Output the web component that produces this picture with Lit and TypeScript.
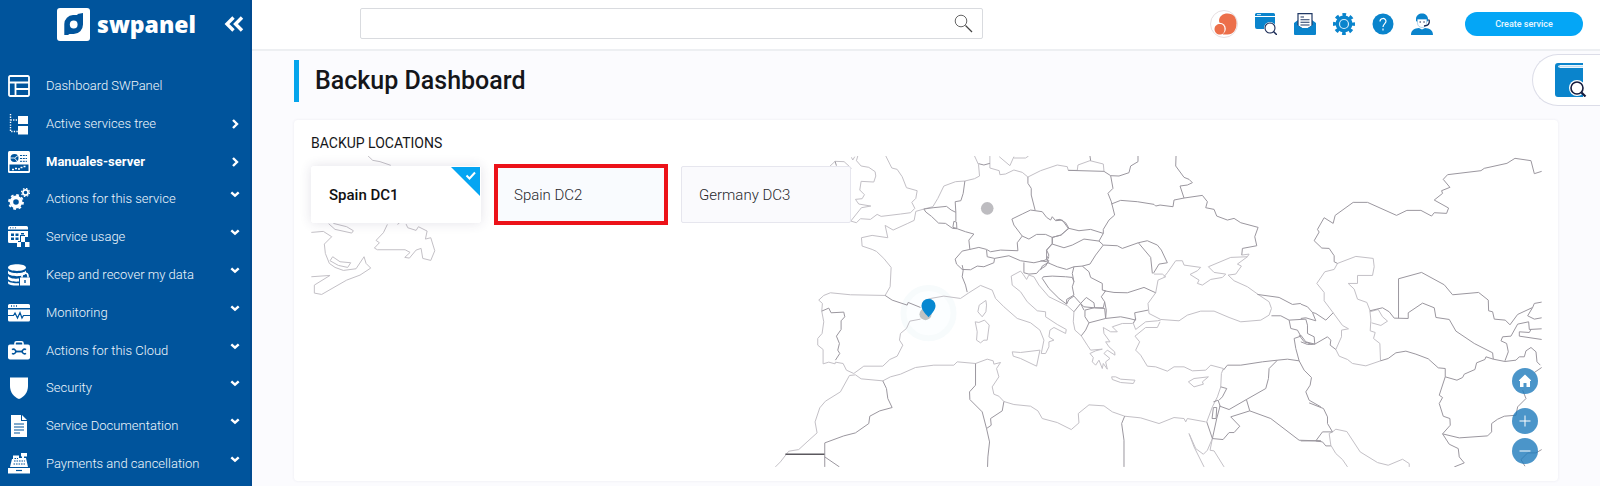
import { LitElement, html, svg, css } from "lit";
import { customElement, property, state } from "lit/decorators.js";
import { classMap } from "lit/directives/class-map.js";

/* ---------- map data: every sheet is drawn at three units per map unit ---------- */

interface Sheet {
  x: number;
  y: number;
  coast: string;
  border: string;
}

const SHEETS: Sheet[] = [
  {
    x: -31,
    y: -116,
    coast: `M264,348 278,361 300,365 332,376
      M94,577 130,574 155,590 133,612 136,640 148,670 165,682 190,691 228,686 252,650 258,670 272,684 240,705 200,720 165,740 125,763 103,759 103,735 150,706 94,710
      M146,551 165,568 215,579 220,572 200,560 160,550
      M158,650 180,665 212,668 203,682 175,676 150,662Z
      M322,553 310,578 288,601 298,608 283,624 292,629 375,629 390,637 374,652 388,654 408,630 423,625 428,655 452,661 464,632 452,593 436,597 441,573 415,560 408,571 383,563 378,552
      M352,553 358,549`,
    border: "",
  },
  {
    x: 489,
    y: -16,
    coast: `M88,79 104,64 131,65 153,85
      M172,48 168,62 182,78 205,82 224,95 226,108 220,126 182,124 178,150 192,164 185,176 165,178 175,192 211,198 183,203 151,243 168,248 180,236 210,238 230,223 242,229 300,222 330,218 343,205 334,187 346,175 350,152 318,143 305,110 290,88 274,84 256,48
      M153,52 157,60 163,50
      M370,207 346,214 341,241 322,250 278,270 254,256 262,293 215,286 183,293 185,318 215,328 228,334 250,355 272,382 269,440 254,466
      M370,207 397,200 412,175 430,138 465,125 493,123 522,116 537,108 534,74 522,48
      M568,48 568,84 596,92 598,104 615,102 640,90 665,97 682,111 720,92 770,75 800,80 803,91
      M596,50 628,77 640,50 M640,54 675,54 684,48
      M385,476 430,468 480,475 505,458 540,436 575,450 585,475 610,500 650,535 690,548 718,570 730,600 722,640 735,640 745,620 745,605 760,600 745,590 748,570 760,562 795,580 797,568 770,553 735,530 735,515 710,512 680,485 660,455 635,435 632,408 660,393 668,403 678,418 685,405 700,410 715,435 745,470 800,497
      M556,481 536,495 532,515 545,530 556,515 558,495Z
      M524,545 535,547 552,540 566,555 560,600 550,600 540,608 528,600 530,575Z
      M635,635 660,637 718,630 708,678 660,655 638,648Z
      M360,537 328,543 318,565 300,580 297,600 307,615 290,648 268,658 247,678 190,678 160,700 138,690 128,670 105,666 104,671 85,666 68,671 68,628 52,615 52,595 65,580 70,545 64,513 66,490 55,480 70,466 90,458 150,464 254,466
      M147,706 120,755 75,783 58,803 44,845 50,878 20,905 -5,928 -35,933 -60,965 -75,980
      M147,706 165,704 182,716 247,722 270,710 300,702 345,682 400,675 460,675 470,665 525,670 560,657 578,662 580,672 600,667 588,685 595,710 575,740 580,762 595,768 610,784 640,793 690,798 712,812 725,835 770,847 812,868`,
    border: `M104,64 108,77
      M370,207 376,216 393,229 414,249 435,250 456,265 470,266 495,275 520,282 505,300 508,328
      M370,207 398,203 438,199 452,210 466,217 466,243 M460,244 457,262 469,265 468,246Z
      M493,123 488,160 481,182 464,185 466,217
      M534,71 550,75 568,70
      M682,111 682,130 692,145 692,165 704,212 690,210 665,222 634,237 640,255 665,288 685,297 708,283 735,283 755,292 782,285 803,265
      M704,212 725,215 738,232 750,240 755,230 765,242 785,240 803,265
      M665,288 650,308 652,332 600,330 570,335 558,328 535,322 508,328 485,333 464,357 468,372 485,388 510,389 530,378 550,380 580,368 582,355 560,350 558,330
      M582,355 625,347 660,362 700,368 735,360 745,345 738,330 755,310 755,292
      M485,375 488,390 485,410 495,435 500,456
      M254,466 275,480 320,495 323,487 360,502
      M670,367 670,398 685,402 708,400 718,388 735,378 745,360
      M64,513 85,504 92,518 130,516 133,530 122,542 122,568 108,588 117,610 112,630 118,640 105,660
      M247,722 258,745 262,775 275,802 238,812 208,828 205,850 165,878 130,887 73,908 73,980 M73,950 117,980
      M525,670 525,735 507,755 508,778 545,815 558,865 567,905 562,950 561,980 M558,865 572,855 570,835 605,812 610,784`,
  },
  {
    x: 729,
    y: -16,
    coast: `M83,91 110,91 112,75 148,62 188,72 190,93
      M92,868 115,848 113,820 145,794 190,797 215,815 252,828 300,833 355,850 400,832 430,835 435,845 440,835 495,845
      M603,345 625,342 620,350 570,352 503,380 520,397 555,402 545,412 510,418 485,435 470,430 475,420 448,403 470,392 480,382 430,375 425,362 405,362 380,398 370,410
      M620,350 590,372 602,378 585,402 562,405 580,422 620,440 655,465 685,485 692,505 685,525 660,540 600,545 565,532 520,513 480,513 440,525 415,542 360,538 325,520 322,490 345,458 352,420 375,410 365,402 340,402
      M80,497 100,515 98,545 103,570 122,587
      M122,587 140,615 150,630 185,627 165,632 148,640 158,652 155,665 165,675 175,660 185,685 188,670 200,687 195,665 208,655 190,640 200,630 223,645 222,635 205,620 195,605 208,605 190,580 188,562 210,575 230,575 215,560 245,550 275,550 280,545
      M278,550 285,568 315,545 350,542 360,540
      M358,545 350,562 315,562 283,588 297,605 285,630 300,645 320,678 345,680 380,693 400,680 430,680 455,692 495,690 510,675 548,685 542,700 540,740 530,770 515,800 498,845
      M443,725 460,715 503,710 485,725 488,732 460,740Z
      M213,710 225,710 240,717 283,720 278,730 240,727 215,718Z
      M490,980 460,920 445,880 465,925 488,942 500,930 515,895 508,930 520,932 550,980`,
    border: `M83,91 190,94 210,107 235,108 265,98 270,78 292,65 292,48 M148,48 150,62
      M210,107 217,145 202,160 212,185 222,225 205,240 188,268 188,280
      M212,192 240,181 290,185 340,193 345,198 358,195 397,200 400,180 430,174 418,138 440,135 455,128 445,118 430,112 405,78 406,48
      M430,174 485,166 500,185 495,203 520,208 528,228 560,240 580,235 600,248 652,262 642,290 648,317 605,325 603,345
      M188,315 230,317 245,325 293,308 320,302 350,315 362,330 380,368 355,372 338,400 M293,308 330,352 335,400
      M188,315 165,345 148,372 125,378 100,380 78,388 50,380 22,368 5,378 0,390
      M188,280 175,303 130,297 95,315 70,323 35,312 35,292 60,285 85,265 115,272 150,268 188,280 M175,303 188,315
      M45,240 58,238 75,248 85,265
      M35,312 18,330 18,358 25,368 M25,350 18,365 0,362
      M125,378 145,395 150,412 185,430 185,450 195,452 182,470 192,485 188,503 162,503 160,488 137,472 120,490 M100,380 95,400 100,425
      M5,415 25,445 55,475 78,492 78,478 100,465 95,440 100,425 95,412 75,410 35,408 8,410Z
      M190,452 220,457 260,458 310,442 345,458
      M192,485 197,510 195,535 240,530 265,535 285,540 282,518 322,510 M285,535 278,550
      M78,492 85,478 100,468 120,490 100,515 M120,490 130,500 160,503
      M133,510 160,503 192,505 195,535 145,548 133,530Z M122,587 135,570 145,548 M120,490 130,510
      M548,690 560,675 600,675 665,665 710,660 740,657 775,662 790,690 812,712 808,735 795,755 805,780 840,800
      M540,740 558,745 545,770 535,780
      M710,660 685,685 683,715 675,745 617,778 565,808 535,797
      M617,778 627,812 570,830 597,858 580,877 565,877 547,898 515,895 528,835 538,797 532,780 518,785
      M518,802 528,802 526,835 514,835Z M498,845 515,895
      M252,828 243,850 250,900 250,980
      M627,812 690,835 775,900 840,902
      M775,662 765,625 760,595 780,588 770,570 750,565 745,540 720,527 692,527
      M650,463 715,472 755,493 780,490
      M745,540 795,537 M775,585 790,605 815,613`,
  },
  {
    x: 989,
    y: -16,
    coast: `M95,875 85,880 90,915 105,940 125,958 140,980
      M95,875 105,867 138,874 178,935 230,967 262,975 305,957 325,970 325,980
      M110,370 165,349 217,355 220,380 215,406 170,406 170,430 142,430 160,447 170,477 198,487 207,510 210,540 208,572 223,577 218,595 237,610 239,662 195,677 155,670 140,658 115,648 105,628 122,590 122,570 143,566 125,556 97,518 70,482 70,457 48,430 72,395 100,388Z
      M207,515 232,508 245,530 260,543 240,556 212,548`,
    border: `M60,902 45,902 0,902 M45,902 65,875 95,875 M45,902 65,905 75,917 90,917
      M25,788 68,805 80,830 80,850 95,875
      M722,94 700,101 690,62 642,55 618,70 550,85 540,92 440,104 427,118 447,142 422,152 425,160 400,180 443,204 437,220 400,218 392,228 360,211 318,211 287,226 200,187 157,187 103,226 97,250 70,233 50,268 55,276 40,302 63,324 85,325 100,347 100,365 110,370
      M207,512 245,503 265,515 280,534 322,535 322,518 365,489 400,503 405,532 445,538 465,573 520,610 575,638 577,657
      M293,534 293,416 362,397 430,434 455,464 533,457 562,480 563,512 575,515 580,537 613,540 627,554 650,523 695,502 700,490 722,486
      M695,502 680,527 700,537 722,533
      M722,566 685,568 683,545 650,552 630,588 605,590 600,602 617,610 622,635 612,662
      M722,598 655,588 655,575 685,577 690,568
      M239,662 262,655 285,638 315,633 345,642 382,656 412,683 433,685 433,710 468,720 485,712 490,702 522,688 527,668 552,658 555,650 577,657 612,664 645,660 655,650 670,650 675,632 690,622 705,635 708,665 718,675
      M433,710 415,765 425,772 415,790 427,828 447,835 448,855 425,881 475,893 560,887 572,875 572,850 590,837 610,828 645,825 650,800 675,775 665,750 M722,682 700,697
      M425,881 445,912 472,925 475,950 490,968 460,980
      M722,928 705,938 680,938 660,958 672,978
      M0,492 20,500 35,517 45,520 75,540 97,518 M35,517 45,542 15,533 0,535
      M15,537 20,555 20,580 40,590 42,612 15,605 0,585 M0,605 20,613 42,612 80,590 90,600 88,615 105,628`,
  },
];

/* ---------- icons ---------- */

const frame = (content: unknown, size = 22) =>
  html`<svg class="icon" width=${size} height=${size} viewBox="0 0 22 22" aria-hidden="true">${content}</svg>`;

const ICONS: Record<string, unknown> = {
  dashboard: svg`<path d="M1 2.2A1.2 1.2 0 0 1 2.2 1H19.8A1.2 1.2 0 0 1 21 2.2V19.8A1.2 1.2 0 0 1 19.8 21H2.2A1.2 1.2 0 0 1 1 19.8ZM1 7.5H21M7.5 7.5V21M7.5 14H21" fill="none" stroke="#fff" stroke-width="1.8"/>`,
  tree: svg`<path d="M2.5 1V18.500H10M2.500 7H10" fill="none" stroke="#fff" stroke-width="1.400" stroke-dasharray="1.300 1.300"/><path d="M10 3H20V11H10ZM10 13H20V21.500H10Z" fill="#fff"/>`,
  server: svg`<rect x="0" y="0" width="22" height="22" rx="1.500" fill="#fff"/><path d="M1.500 13.500H20.500V20H1.500Z" fill="#00549c"/><circle cx="6.500" cy="7" r="4" fill="#00549c"/><path d="M6.500 7 11 4M6.500 7 10 11M6.500 7H2" stroke="#fff" stroke-width=".9"/><path d="M12 4.500H19M12 7.500H19M12 10.300H19" stroke="#00549c" stroke-dasharray="2 .8"/><path d="M4 18.500H6M7 17.500H9M10 18H12M12.500 16.500H14.500M15.500 15.500H17.500" stroke="#fff" stroke-width="1.600"/>`,
  gears: svg`<circle cx="8" cy="14" r="4.600" fill="none" stroke="#fff" stroke-width="3.600"/><circle cx="8" cy="14" r="7" fill="none" stroke="#fff" stroke-width="1.800" stroke-dasharray="2.750 2.750"/><circle cx="17.500" cy="4.500" r="2.600" fill="none" stroke="#fff" stroke-width="1.700"/><circle cx="17.500" cy="4.500" r="4" fill="none" stroke="#fff" stroke-width="1.200" stroke-dasharray="1.570 1.570"/>`,
  usage: svg`<path d="M0 1.500A1.500 1.500 0 0 1 1.500 0H18.500A1.500 1.500 0 0 1 20 1.500V3.500H0ZM0 5H20V11H17V9H12V15H10V17H1.500A1.500 1.500 0 0 1 0 15.500Z" fill="#fff"/><path d="M3 7.500H6V10H3ZM7.500 7.500H10.500V10H7.500ZM3 11.500H6V14H3ZM7.500 11.500H10.500V14H7.500ZM13 7H16V8.500H13Z" fill="#00549c"/><path d="M13 10H17V14H13ZM9 16H13V21H9ZM17 16H21.500V21H17ZM13 14H17V16H13Z" fill="#fff"/><path d="M2 1.800H3M4.500 1.800H5.500M7 1.800H8" stroke="#00549c"/>`,
  data: svg`<path d="M0 3.500C0-1 18-1 18 3.500S0 8 0 3.500M0 6.500C2 10 16 10 18 6.500V9.500C16 13 2 13 0 9.500ZM0 12C2 15 9 14.800 11 14.500V17.500C6 18 1 17 0 15ZM0 17.300C2 19 8 19.500 11 19.300V21.500C6 21.800 0 21 0 19Z" fill="#fff"/><path d="M12 13.500H22V21.500H12Z" fill="#fff"/><path d="M14 13.500V12A3 3 0 0 1 20 12V13.500" fill="none" stroke="#fff" stroke-width="1.600"/><path d="M17 16V19" stroke="#00549c" stroke-width="1.400"/>`,
  monitor: svg`<path d="M0 3.500A1.500 1.500 0 0 1 1.500 2H20.500A1.500 1.500 0 0 1 22 3.500V6H0ZM0 7.500H22V18A1.500 1.500 0 0 1 20.500 19.500H1.500A1.500 1.500 0 0 1 0 18Z" fill="#fff"/><path d="M3 4H4M5.500 4H6.500M8 4H9" stroke="#00549c" stroke-width="1.400"/><path d="M0 13.500H5.500L7 11 9.500 16 12 10.500 14 16 15.500 13.500H22" fill="none" stroke="#00549c" stroke-width="1.200"/>`,
  toolbox: svg`<path d="M7 5V3.200A1.500 1.500 0 0 1 8.500 1.700H13.500A1.500 1.500 0 0 1 15 3.200V5" fill="none" stroke="#fff" stroke-width="1.600"/><rect x="0" y="4.500" width="22" height="15" rx="2" fill="#fff"/><path d="M7 11.500H15" stroke="#00549c" stroke-width="1.800"/><path d="M4 9.700A2.300 2.300 0 1 1 4 13.300M18 9.700A2.300 2.300 0 1 0 18 13.300" fill="none" stroke="#00549c" stroke-width="1.500"/>`,
  shield: svg`<path d="M2 .5H20V9C20 15.500 16 20 11 22 6 20 2 15.500 2 9Z" fill="#fff"/>`,
  doc: svg`<path d="M3 0H13V6H19V22H3ZM14 0 19 5H14Z" fill="#fff"/><path d="M6 9H16M6 12H16M6 15H16M6 18H12" stroke="#00549c" stroke-width="1.100"/>`,
  till: svg`<path d="M5 2.500H11V5H14V3.500H13V0H19V3.500H16V5H18L20 14H2L4 6H5Z" fill="#fff"/><path d="M6.500 5.500H10M6 8H17M5.500 11H17" stroke="#00549c" stroke-width="1.100" stroke-dasharray="1.600 .9"/><path d="M0 15H22V20.500H0Z" fill="#fff"/><path d="M8 17.500H14" stroke="#00549c" stroke-width="1.200"/>`,
};

interface NavItem {
  label: string;
  icon: string;
  mark?: "right" | "down";
  strong?: boolean;
}

const NAV: NavItem[] = [
  { label: "Dashboard SWPanel", icon: "dashboard" },
  { label: "Active services tree", icon: "tree", mark: "right" },
  { label: "Manuales-server", icon: "server", mark: "right", strong: true },
  { label: "Actions for this service", icon: "gears", mark: "down" },
  { label: "Service usage", icon: "usage", mark: "down" },
  { label: "Keep and recover my data", icon: "data", mark: "down" },
  { label: "Monitoring", icon: "monitor", mark: "down" },
  { label: "Actions for this Cloud", icon: "toolbox", mark: "down" },
  { label: "Security", icon: "shield", mark: "down" },
  { label: "Service Documentation", icon: "doc", mark: "down" },
  { label: "Payments and cancellation", icon: "till", mark: "down" },
];

@customElement("side-bar")
export class SideBar extends LitElement {
  static styles = css`
    :host {
      display: block;
      background: #00549c;
      border-right: 2px solid #004a90;
      box-sizing: border-box;
      color: #fff;
    }
    .brand {
      display: flex;
      align-items: center;
      height: 67px;
      box-sizing: border-box;
      padding: 0 6px 19px 57px;
    }
    .name {
      flex: 1;
      margin-left: 7px;
      font: 800 23px/32px "Open Sans", sans-serif;
    }
    .brand svg {
      flex: none;
    }
    button {
      border: 0;
      padding: 0;
      background: none;
      display: flex;
      cursor: pointer;
    }
    .menu {
      display: grid;
      grid-auto-rows: 1fr;
      height: 416px;
    }
    .item {
      display: flex;
      align-items: center;
      padding: 0 10px 0 8px;
      color: #f0f7fd;
      font-size: 13px;
      font-weight: 300;
      line-height: 20px;
      text-decoration: none;
    }
    .strong {
      font-weight: 700;
      color: #fff;
    }
    .text {
      flex: 1;
      margin-left: 16px;
    }
    .icon,
    .mark {
      flex: none;
    }
    .down {
      margin-bottom: 10px;
    }
  `;

  render() {
    return html`
      <div class="brand">
        <svg width="33" height="33" viewBox="0 0 33 33" aria-hidden="true">
          <rect width="33" height="33" rx="3" fill="#fff" />
          <path d="M7.300 27V16A9.300 9.300 0 0 1 16 7H20.500V6L26 5V16.500A9.500 9.500 0 0 1 16.700 26H12.500L11 27Z" fill="#00549c" />
          <circle cx="16.700" cy="16.500" r="3.900" fill="#fff" />
        </svg>
        <span class="name">swpanel</span>
        <button aria-label="Collapse menu">
          <svg width="20" height="16" viewBox="0 0 20 16">
            <path d="M9.500 1.500 3 8 9.500 14.500M18 1.500 11.500 8 18 14.500" fill="none" stroke="#fff" stroke-width="3.400" />
          </svg>
        </button>
      </div>
      <nav class="menu">
        ${NAV.map(
          (n) => html`<a href="#" class=${classMap({ item: true, strong: !!n.strong })}>
            ${frame(ICONS[n.icon])}
            <span class="text">${n.label}</span>
            ${n.mark === "right"
              ? html`<svg class="mark" width="10" height="10" viewBox="0 0 10 10"><path d="M3 1 7 5 3 9" fill="none" stroke="#fff" stroke-width="2.400" /></svg>`
              : n.mark === "down"
                ? html`<svg class="mark down" width="10" height="10" viewBox="0 0 10 10"><path d="M1.300 3.300 5 6.700 8.700 3.300" fill="none" stroke="#fff" stroke-width="2.400" /></svg>`
                : ""}
          </a>`
        )}
      </nav>
    `;
  }
}

const glass = (cx: number, cy: number, r: number) =>
  svg`<circle cx=${cx} cy=${cy} r=${r + 1} fill="#fff"/><path d="M${cx + r * 0.7} ${cy + r * 0.7} 22 22" stroke="#1a2a55" stroke-width="1.500"/><circle cx=${cx} cy=${cy} r=${r} fill="#fff" stroke="#1a2a55" stroke-width="1.100"/>`;

const TOOLS: { label: string; art: unknown }[] = [
  {
    label: "Service search",
    art: svg`<path d="M0 1.500A1.500 1.500 0 0 1 1.500 0H18.500A1.500 1.500 0 0 1 20 1.500V3H0ZM0 4H20V16H2A2 2 0 0 1 0 14Z" fill="#0a84cc"/><path d="M2 1.600H6" stroke="#fff" stroke-width=".8"/>${glass(15, 15, 5)}`,
  },
  {
    label: "Messages",
    art: svg`<path d="M0 10 4 7V14H18V7L22 10V21A1 1 0 0 1 21 22H1A1 1 0 0 1 0 21Z" fill="#0a84cc"/><path d="M4 .7H18V13L14 15.500H8L4 13Z" fill="#fff" stroke="#223a66" stroke-width="1.200"/><path d="M6.500 4H10M6.500 6.700H15.500M6.500 9.300H15.500M6.500 12H15.500" stroke="#223a66" stroke-width="1.100"/><path d="M0 10 4 12.500 8 15H14L18 12.500 22 10V15L14 18H8L0 15Z" fill="#0a84cc"/>`,
  },
  {
    label: "Settings",
    art: svg`<circle cx="11" cy="11" r="9.300" fill="none" stroke="#0a84cc" stroke-width="3.400" stroke-dasharray="3.650 3.650" stroke-dashoffset="1.830"/><circle cx="11" cy="11" r="8.400" fill="#0a84cc"/><circle cx="11" cy="11" r="4.500" fill="none" stroke="#d6ecfa" stroke-width="1.200"/>`,
  },
  {
    label: "Help",
    art: svg`<circle cx="11" cy="11" r="10.500" fill="#0a84cc"/><path d="M8 8.500C8 4.500 14 4.500 14 8.300 14 10.500 11 10.800 11 14M11 15.500V17.500" fill="none" stroke="#fff" stroke-width="1.200"/>`,
  },
  {
    label: "Support",
    art: svg`<path d="M0 22C0 17 3.500 15.500 8 15L11 16.500 14 15C18.500 15.500 22 17 22 22Z" fill="#0a84cc"/><path d="M5 8V6C5-1.500 17-1.500 17 6V9L15 6H7L6.500 9Z" fill="#0a84cc"/><path d="M6.500 6.500H15.500V10C15.500 16 6.500 16 6.500 10Z" fill="#fff" stroke="#7fb8df" stroke-width=".6"/><path d="M8.500 9H10M12.300 9H13.800" stroke="#1a2a55" stroke-width="1.200"/><path d="M17.500 6.500C19 8 18.500 11 16 12.500L13 13" fill="none" stroke="#1a2a55" stroke-width="1.300"/>`,
  },
];

@customElement("top-bar")
export class TopBar extends LitElement {
  static styles = css`
    :host {
      display: flex;
      align-items: center;
      height: 51px;
      box-sizing: border-box;
      padding: 0 17px 2px 108px;
      border-bottom: 2px solid #edeff2;
      background: #fff;
    }
    .search {
      display: flex;
      align-items: center;
      flex: 0 1 623px;
      height: 31px;
      box-sizing: border-box;
      padding: 0 9px;
      border: 1px solid #d9dbdf;
      border-radius: 2px;
    }
    input {
      flex: 1;
      min-width: 0;
      border: 0;
      outline: 0;
      padding: 0;
      background: none;
      font: 14px Roboto, sans-serif;
    }
    button {
      border: 0;
      padding: 0;
      background: none;
      display: flex;
      cursor: pointer;
    }
    .tools {
      display: flex;
      align-items: center;
      gap: 17px;
      margin-left: auto;
    }
    .create {
      margin-left: 32px;
      width: 118px;
      height: 24px;
      align-items: center;
      justify-content: center;
      border-radius: 12px;
      background: #04a6f6;
      color: #e8f7ff;
      font: 500 9px/12px Roboto, sans-serif;
    }
  `;

  render() {
    return html`
      <form class="search" role="search">
        <input type="search" aria-label="Search" />
        <button type="button" aria-label="Run search">
          <svg width="19" height="19" viewBox="0 0 19 19">
            <path d="M11.500 11.500 18 18" stroke="#444" stroke-width="1.300" />
            <circle cx="7" cy="7" r="5.800" fill="none" stroke="#666" stroke-width="1" />
          </svg>
        </button>
      </form>
      <div class="tools">
        <button aria-label="Account">
          <svg width="28" height="28" viewBox="0 0 28 28">
            <circle cx="14" cy="14" r="13.500" fill="#fff" stroke="#e6dfe2" />
            <path d="M9 11C9 6 13 3.500 17.500 3.500 23.500 3.500 26.500 7.500 26.500 13.500 26.500 20 23 24.500 17.500 24.500H13Z" fill="#ec6f4a" />
            <circle cx="9.800" cy="18.800" r="6" fill="#fff" />
            <path d="M4.500 19C4.500 16 7 14 10 14 13 14 14.500 16 14.500 19.200 14.500 23 12.500 24.500 9.800 24.500 7 24.500 4.500 22.500 4.500 19Z" fill="#ec6f4a" />
          </svg>
        </button>
        ${TOOLS.map((t) => html`<button aria-label=${t.label}>${frame(t.art)}</button>`)}
      </div>
      <button class="create">Create service</button>
    `;
  }
}

@customElement("location-map")
export class LocationMap extends LitElement {
  static styles = css`
    :host {
      display: grid;
    }
    .map,
    .controls {
      grid-area: 1 / 1;
    }
    .map {
      display: block;
      width: 100%;
      height: auto;
    }
    .coast,
    .border {
      fill: none;
      vector-effect: non-scaling-stroke;
      stroke-width: 1;
    }
    .coast {
      stroke: #c3c0c6;
    }
    .border {
      stroke: #9b979f;
    }
    .controls {
      align-self: end;
      justify-self: end;
      display: flex;
      flex-direction: column;
      gap: 4px;
      padding: 0 4px 3px 0;
    }
    button {
      width: 26px;
      height: 26px;
      border: 0;
      padding: 0;
      border-radius: 13px;
      background: rgba(30, 123, 188, 0.8);
      display: flex;
      cursor: pointer;
    }
    .home {
      margin-bottom: 10px;
    }
  `;

  render() {
    const round = (d: string) =>
      html`<svg width="26" height="26" viewBox="0 0 26 26"><path d=${d} fill="#fff" /></svg>`;
    return html`
      <svg class="map" viewBox="0 0 1230 311" role="img" aria-label="Map of backup locations">
        <circle cx="617" cy="157" r="25" fill="#fcfeff" stroke="#f7fbfc" stroke-width="6" />
        ${SHEETS.map(
          (s) => svg`<g transform="translate(${s.x} ${s.y}) scale(.33333)">
            <path class="coast" d=${s.coast}></path><path class="border" d=${s.border}></path>
          </g>`
        )}
        <path d="M474 298H513" stroke="#5b585e" stroke-width="1.300" />
        <circle cx="675.700" cy="52.300" r="6.300" fill="#bdbcc0" />
        <circle cx="614" cy="158" r="6" fill="#bfc3c3" />
        <path d="M617 161C613 157 610 153.500 610 149.700A7 7 0 0 1 624 149.700C624 153.500 621 157 617 161Z" fill="#0788d1" />
      </svg>
      <div class="controls">
        <button class="home" aria-label="Reset view">${round("M13 6.500 19 12.300V13H18V19H14.500V15H11.500V19H8V13H7V12.300Z")}</button>
        <button aria-label="Zoom in">${round("M7.500 12.500H12.500V7.500H13.500V12.500H18.500V13.500H13.500V18.500H12.500V13.500H7.500Z")}</button>
        <button aria-label="Zoom out">${round("M7.500 12.500H18.500V13.500H7.500Z")}</button>
      </div>
    `;
  }
}

@customElement("location-picker")
export class LocationPicker extends LitElement {
  @property({ type: Array }) places: string[] = [];
  @property() marked = "";
  @state() private chosen = 0;

  static styles = css`
    :host {
      display: flex;
      flex-wrap: wrap;
      gap: 15px;
    }
    .place {
      display: flex;
      width: 170px;
      height: 57px;
      box-sizing: border-box;
      align-items: center;
      justify-content: space-between;
      padding: 0 0 0 17px;
      border: 1px solid #e6e6ee;
      border-radius: 2px;
      background: #fafafd;
      color: #26282c;
      font: 300 15px/20px Roboto, sans-serif;
      cursor: pointer;
    }
    .chosen {
      border-color: #fff;
      background: #fff;
      color: #111;
      font-weight: 500;
      box-shadow: 0 0 12px rgba(60, 50, 90, 0.14);
    }
    .marked {
      outline: 4px solid #ec1219;
      outline-offset: -2px;
      border-radius: 0;
      background: #f9fbfe;
    }
    .tick {
      align-self: flex-start;
    }
  `;

  render() {
    return this.places.map(
      (p, i) => html`<button
        class=${classMap({ place: true, chosen: i === this.chosen, marked: p === this.marked })}
        aria-pressed=${i === this.chosen}
        @click=${() => (this.chosen = i)}
      >
        ${p}
        ${i === this.chosen
          ? html`<svg class="tick" width="29" height="29" viewBox="0 0 29 29">
              <path d="M0 0H29V29Z" fill="#05a5f2" />
              <path d="M15.500 8.500 18.500 11.500 24 5.500" fill="none" stroke="#fff" stroke-width="2" />
            </svg>`
          : ""}
      </button>`
    );
  }
}

@customElement("app-root")
export class AppRoot extends LitElement {
  static styles = css`
    :host {
      display: grid;
      grid-template-columns: 252px minmax(0, 1fr);
      min-height: 100vh;
      font-family: Roboto, sans-serif;
      background: #fbfbfe;
      color: #15161a;
    }
    .page {
      position: relative;
    }
    main {
      padding: 9px 42px 5px;
    }
    h1 {
      margin: 0 0 18px;
      border-left: 5px solid #05a5ec;
      padding-left: 16px;
      font-size: 25px;
      font-weight: 500;
      line-height: 42px;
    }
    .panel {
      background: #fff;
      border-radius: 4px;
      box-shadow: 0 0 3px rgba(40, 40, 90, 0.08);
      padding: 15px 16px 14px 17px;
    }
    h2 {
      margin: 0 0 5px;
      font-size: 14px;
      font-weight: 400;
      line-height: 16px;
    }
    .stage {
      display: grid;
    }
    .stage > * {
      grid-area: 1 / 1;
    }
    location-picker {
      align-self: start;
      padding-top: 10px;
    }
    .manual {
      position: absolute;
      top: 54px;
      right: 0;
      width: 68px;
      height: 52px;
      box-sizing: border-box;
      display: flex;
      align-items: center;
      padding: 0 0 0 22px;
      border: 1px solid #dcdde8;
      border-right: 0;
      border-radius: 26px 0 0 26px;
      background: #fff;
      cursor: pointer;
    }
  `;

  render() {
    return html`
      <side-bar></side-bar>
      <div class="page">
        <top-bar></top-bar>
        <main>
          <h1>Backup Dashboard</h1>
          <section class="panel">
            <h2>BACKUP LOCATIONS</h2>
            <div class="stage">
              <location-map></location-map>
              <location-picker
                .places=${["Spain DC1", "Spain DC2", "Germany DC3"]}
                marked="Spain DC2"
              ></location-picker>
            </div>
          </section>
        </main>
        <button class="manual" aria-label="Open manual">
          <svg width="32" height="34" viewBox="0 0 32 34">
            <path d="M3 0H28V2H4.500V5H28V34H3A3 3 0 0 1 0 31V3A3 3 0 0 1 3 0Z" fill="#0a84cc" />
            <path d="M3 3.500H28" stroke="#bcdcf2" stroke-width="1.600" />
            <circle cx="22" cy="25" r="8" fill="#fff" />
            <path d="M26.500 29.500 30.500 33.500" stroke="#141a3c" stroke-width="2.200" />
            <circle cx="22" cy="25" r="6" fill="#fff" stroke="#141a3c" stroke-width="1.600" />
          </svg>
        </button>
      </div>
    `;
  }
}
